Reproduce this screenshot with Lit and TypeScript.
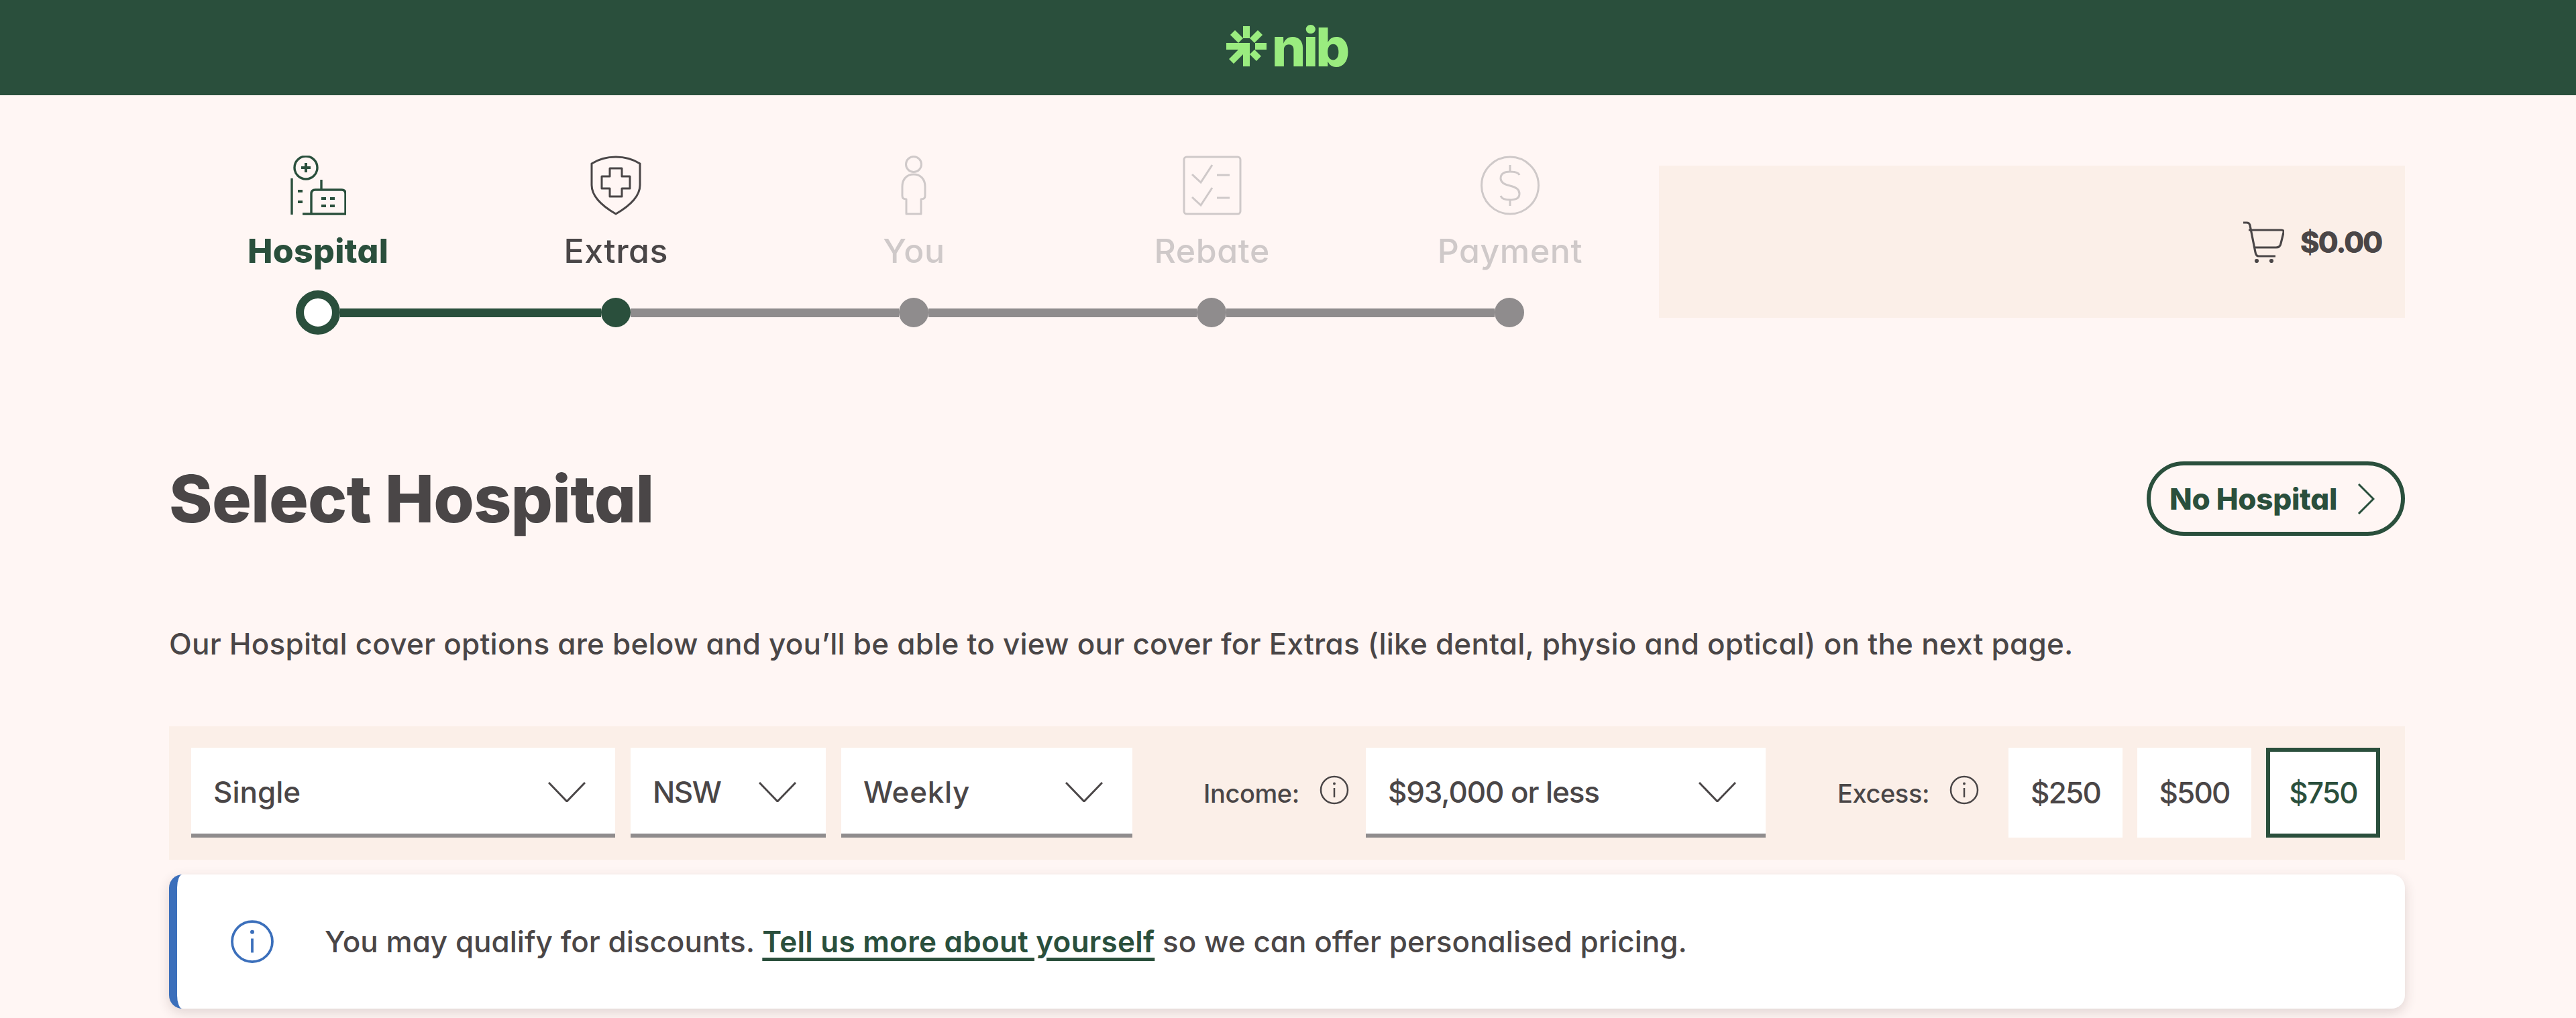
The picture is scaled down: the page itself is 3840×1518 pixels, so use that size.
import { LitElement, html, css, svg } from "lit";
import { customElement } from "lit/decorators.js";

const chevron = html`<svg class="chev" viewBox="0 0 56 30"><path d="M1 1 L28 29 L55 1" fill="none" stroke="currentColor" stroke-width="3"/></svg>`;
const info = (cls: string) => html`<svg class=${cls} viewBox="0 0 44 44"><circle cx="22" cy="22" r="20" fill="none" stroke="currentColor" stroke-width="2.5"/><circle cx="22" cy="12.5" r="2" fill="currentColor"/><path d="M22 19 V33" stroke="currentColor" stroke-width="2.5" fill="none"/></svg>`;

const icons = [
  svg`<svg class="ic" width="83" height="89" viewBox="0 0 83 89" fill="none" stroke="currentColor" stroke-width="3.4">
    <circle cx="23" cy="18" r="17"/><path d="M23 11 V25 M16 18 H30" stroke-width="4"/>
    <path d="M2 34 V88 M46 36 V51 M18 87 H82 V57 Q82 51 76 51 H37 Q31 51 31 57 V87"/>
    <path d="M11 53 H18 M11 69 H18 M46 64 H53 M59 64 H66 M46 75 H53 M59 75 H66" stroke-width="4"/></svg>`,
  svg`<svg class="ic" width="78" height="89" viewBox="0 0 78 89" fill="none" stroke="currentColor" stroke-width="3" stroke-linejoin="round">
    <path d="M3 12 C14 5 26 2 39 2 C52 2 64 5 75 12 V44 C75 62 58 76 39 87 C20 76 3 62 3 44 Z"/>
    <path d="M30 19 H48 V31 H60 V49 H48 V61 H30 V49 H18 V31 H30 Z"/></svg>`,
  svg`<svg class="ic" width="38" height="89" viewBox="0 0 38 89" fill="none" stroke="currentColor" stroke-width="3" stroke-linejoin="round">
    <circle cx="19" cy="13" r="11.5"/>
    <path d="M19 28 C9 28 2 35 2 46 V60 Q2 65 8 65 V87 H30 V65 Q36 65 36 60 V46 C36 35 29 28 19 28 Z"/></svg>`,
  svg`<svg class="ic" width="88" height="89" viewBox="0 0 88 89" fill="none" stroke="currentColor" stroke-width="3">
    <rect x="2" y="2" width="84" height="85" rx="4"/>
    <path d="M14 28 L27 40 L44 14 M14 62 L27 74 L44 48 M51 29 H70 M51 63 H70"/></svg>`,
  svg`<svg class="ic" width="90" height="89" viewBox="0 0 90 89" fill="none" stroke="currentColor" stroke-width="3">
    <circle cx="45" cy="44.5" r="42.5"/>
    <path d="M59 29 Q57 24 45 24 Q31 24 31 34 Q31 42 45 45 Q59 48 59 57 Q59 66 45 66 Q33 66 31 60 M45 14 V24 M45 66 V75"/></svg>`,
];

const steps = [
  { label: "Hospital", cls: "active" },
  { label: "Extras", cls: "next" },
  { label: "You", cls: "off" },
  { label: "Rebate", cls: "off" },
  { label: "Payment", cls: "off" },
];

@customElement("app-root")
export class AppRoot extends LitElement {
  static styles = css`
    :host {
      display: block;
      background: #fff6f4;
      height: 1518px;
      overflow: hidden;
      color: #4a4647;
      font-family: Inter, "Noto Sans", sans-serif;
      font-feature-settings: "cv11" 1;
      font-weight: 500;
    }
    .top {
      height: 142px;
      background: #2a4f3c;
      display: flex;
      align-items: center;
      justify-content: center;
      gap: 8px;
      padding-right: 4px;
      box-sizing: border-box;
      color: #9aec7f;
    }
    .mark { width: 60px; height: 60px; margin-top: -4px; }
    .nib {
      font-size: 80px;
      line-height: 60px;
      font-weight: 800;
      letter-spacing: -4px;
      margin-top: -2px;
    }
    main { padding: 90px 255px 0 252px; }
    .upper { display: flex; align-items: flex-start; }
    .stepper { width: 2221px; flex: none; }
    .labels { display: grid; grid-template-columns: repeat(5, 1fr); }
    .step { display: flex; flex-direction: column; align-items: center; }
    .iconbox { height: 89px; display: flex; align-items: flex-start; }
    .step-label {
      margin-top: 23px;
      font-size: 50px;
      line-height: 60px;
      letter-spacing: .6px;
    }
    .active { color: #2a4f3c; }
    .active .step-label { font-weight: 800; letter-spacing: .3px; }
    .next { color: #4a4647; }
    .off { color: #cfc9c9; }
    .track {
      display: flex;
      align-items: center;
      margin: 29px 0 0 189px;
    }
    .ring {
      width: 66px; height: 66px; box-sizing: border-box;
      border: 12px solid #2a4f3c; border-radius: 50%; background: #fff;
    }
    .dot { width: 44px; height: 44px; border-radius: 50%; background: #8f8c8d; flex: none; }
    .dot.done { background: #2a4f3c; }
    .seg { height: 13px; width: 400px; background: #8f8c8d; flex: none; }
    .seg.done { width: 389px; background: #2a4f3c; }
    .cart {
      margin-top: 15px;
      width: 1112px;
      height: 227px;
      background: #fbefe8;
      display: flex;
      align-items: center;
      justify-content: flex-end;
      gap: 24px;
      padding-right: 35px;
      box-sizing: border-box;
    }
    .cart svg { width: 62px; height: 62px; }
    .total { font-size: 44px; font-weight: 800; letter-spacing: -2.4px; }
    .title-row {
      margin-top: 189px;
      height: 111px;
      display: flex;
      align-items: center;
      justify-content: space-between;
    }
    h1 {
      margin: 0;
      font-size: 98px;
      line-height: 111px;
      font-weight: 800;
      letter-spacing: -.8px;
    }
    .skip {
      width: 385px;
      height: 111px;
      box-sizing: border-box;
      border: 6px solid #2a4f3c;
      border-radius: 56px;
      display: flex;
      align-items: center;
      gap: 30px;
      padding-left: 28px;
      color: #2a4f3c;
      font-size: 44px;
      font-weight: 800;
      letter-spacing: -.3px;
    }
    .skip svg { width: 26px; height: 46px; }
    p {
      margin: 131px 0 0;
      font-size: 44px;
      line-height: 60px;
      letter-spacing: .22px;
    }
    .filters {
      margin-top: 93px;
      height: 199px;
      box-sizing: border-box;
      background: #fbefe8;
      padding: 32px 33px;
      display: flex;
      align-items: stretch;
      color: #4a4647;
    }
    .sel {
      background: #fff;
      border-bottom: 6px solid #8f8c8d;
      box-sizing: border-box;
      height: 134px;
      display: flex;
      align-items: center;
      justify-content: space-between;
      padding: 4px 44px 0 33px;
      font-size: 44px;
      flex: none;
    }
    .chev { width: 56px; height: 30px; flex: none; }
    .w-single { width: 632px; margin-right: 23px; }
    .w-state { width: 291px; margin-right: 23px; letter-spacing: -1.5px; }
    .w-freq { width: 434px; margin-right: 106px; letter-spacing: .7px; }
    .w-income { width: 596px; margin-right: 107px; letter-spacing: -1.1px; }
    .lab {
      display: flex;
      align-items: center;
      font-size: 38px;
      letter-spacing: -.4px;
      flex: none;
    }
    .lab .inf { width: 44px; height: 44px; margin: 0 0 10px 30px; }
    .lab.inc { margin-right: 25px; }
    .lab.exc { margin-right: 44px; }
    .btn {
      width: 170px;
      height: 134px;
      background: #fff;
      box-sizing: border-box;
      display: flex;
      align-items: center;
      justify-content: center;
      font-size: 44px;
      letter-spacing: -1.8px;
      margin-right: 22px;
      flex: none;
    }
    .btn:last-child { margin-right: 0; border: 6px solid #2a4f3c; color: #2a4f3c; }
    .alert {
      margin-top: 22px;
      height: 200px;
      box-sizing: border-box;
      background: #fff;
      border-left: 12px solid #3b6fbb;
      border-radius: 20px;
      box-shadow: 0 6px 18px rgba(60, 40, 40, .16);
      display: flex;
      align-items: center;
      padding-left: 79px;
      gap: 75px;
      font-size: 44px;
    }
    .alert .inf { width: 66px; height: 66px; color: #3b6fbb; flex: none; }
    .alert a {
      color: #2a4f3c;
      text-decoration: underline;
      text-decoration-thickness: 5px;
      text-underline-offset: 8px;
      font-weight: 600;
      letter-spacing: .25px;
    }
  `;

  render() {
    return html`
      <div class="top">
        <svg class="mark" viewBox="0 0 60 60" fill="currentColor">
          <path d="M0 25 H35 V60 H25 V42 L11 56 L4 49 L18 35 H0 Z"/>
          <rect x="25" y="0" width="10" height="18"/>
          <rect x="43" y="25" width="17" height="10"/>
          <rect x="25" y="0" width="10" height="17" transform="rotate(45 30 30) translate(0 1)"/>
          <rect x="25" y="0" width="10" height="17" transform="rotate(-45 30 30) translate(0 1)"/>
          <rect x="25" y="4" width="10" height="14" transform="rotate(135 30 30)"/>
        </svg>
        <span class="nib">nib</span>
      </div>
      <main>
        <div class="upper">
          <div class="stepper">
            <div class="labels">
              ${steps.map((s, i) => html`
                <div class="step ${s.cls}">
                  <div class="iconbox">${icons[i]}</div>
                  <div class="step-label">${s.label}</div>
                </div>`)}
            </div>
            <div class="track">
              <div class="ring"></div><div class="seg done"></div>
              <div class="dot done"></div><div class="seg"></div>
              <div class="dot"></div><div class="seg"></div>
              <div class="dot"></div><div class="seg"></div>
              <div class="dot"></div>
            </div>
          </div>
          <div class="cart">
            <svg viewBox="0 0 62 62" fill="none" stroke="#4a4647" stroke-width="3.2">
              <path d="M1 2 H6 Q10 2 11 6 L19 46 Q20 52 24 52 H49"/>
              <path d="M9 13 H58 Q62 13 61 17 L57 33 Q56 39 50 39 H17"/>
              <circle cx="21" cy="59" r="2" fill="#4a4647" stroke="none"/>
              <circle cx="43" cy="59" r="2" fill="#4a4647" stroke="none"/>
              <circle cx="21" cy="59" r="1.5"/><circle cx="43" cy="59" r="1.5"/>
            </svg>
            <span class="total">$0.00</span>
          </div>
        </div>
        <div class="title-row">
          <h1>Select Hospital</h1>
          <div class="skip">
            <span>No Hospital</span>
            <svg viewBox="0 0 26 46"><path d="M2 1 L24 23 L2 45" fill="none" stroke="currentColor" stroke-width="3"/></svg>
          </div>
        </div>
        <p>Our Hospital cover options are below and you’ll be able to view our cover for Extras (like dental, physio and optical) on the next page.</p>
        <div class="filters">
          <div class="sel w-single"><span>Single</span>${chevron}</div>
          <div class="sel w-state"><span>NSW</span>${chevron}</div>
          <div class="sel w-freq"><span>Weekly</span>${chevron}</div>
          <div class="lab inc"><span>Income:</span>${info("inf")}</div>
          <div class="sel w-income"><span>$93,000 or less</span>${chevron}</div>
          <div class="lab exc"><span>Excess:</span>${info("inf")}</div>
          <div class="btn">$250</div>
          <div class="btn">$500</div>
          <div class="btn">$750</div>
        </div>
        <div class="alert">
          ${info("inf")}
          <div>You may qualify for discounts. <a href="#">Tell us more about yourself</a> so we can offer personalised pricing.</div>
        </div>
      </main>
    `;
  }
}
